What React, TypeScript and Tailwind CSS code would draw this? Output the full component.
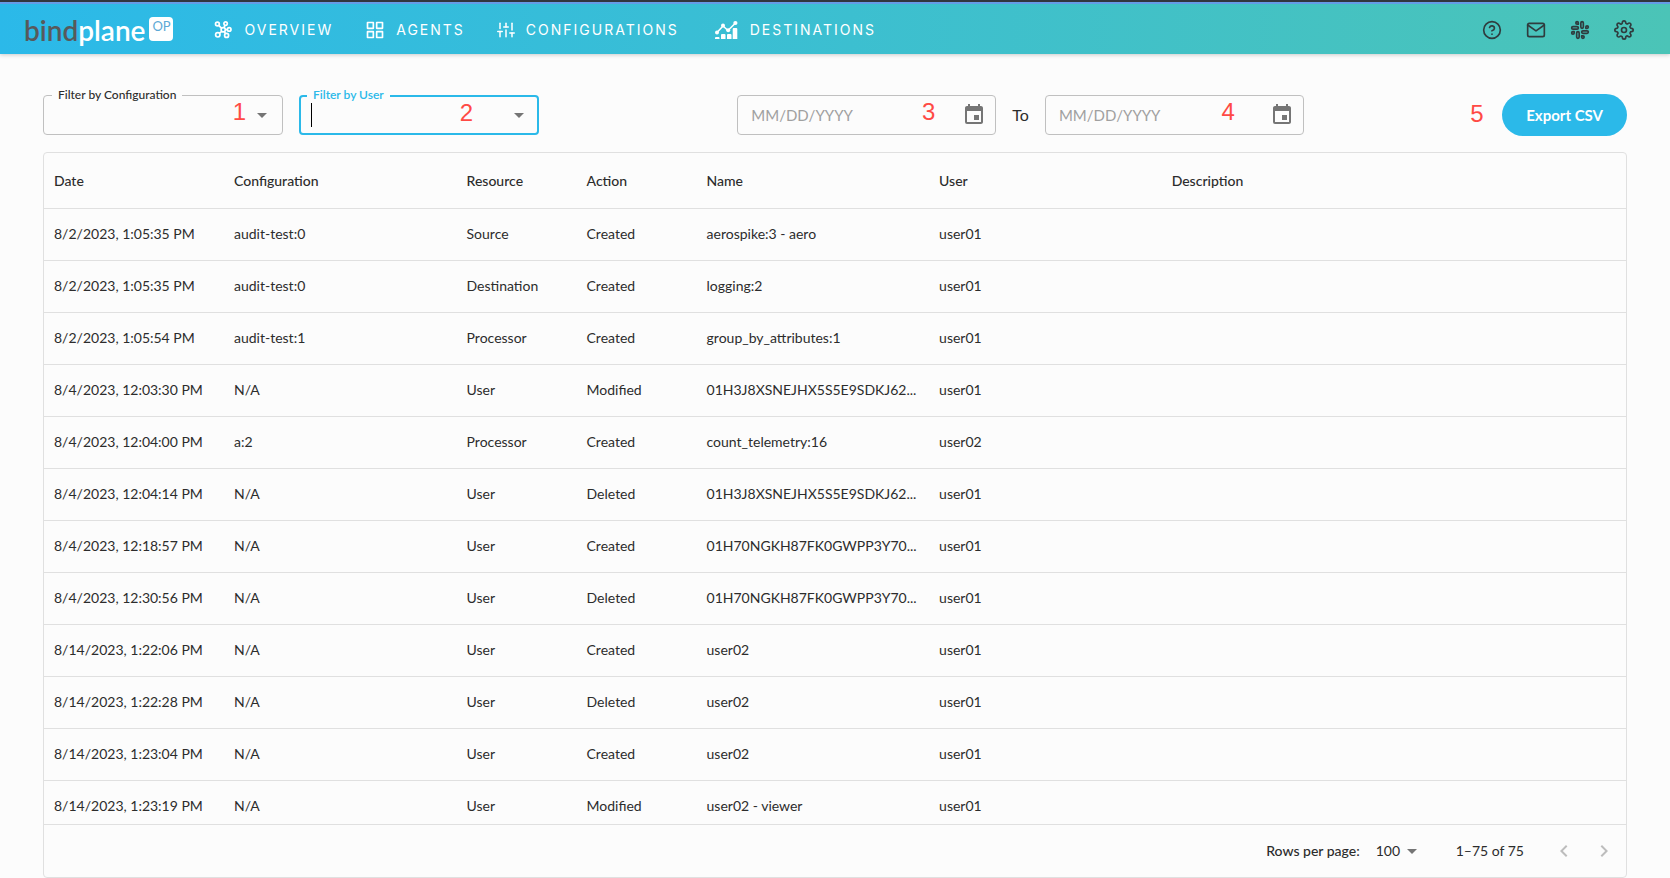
import React from 'react';
import { FiGrid, FiHelpCircle, FiMail, FiSettings, FiSlack, FiSliders } from 'react-icons/fi';
import { MdArrowDropDown, MdChevronLeft, MdChevronRight, MdEvent } from 'react-icons/md';

const OverviewIcon: React.FC = () => (
  <svg width="20" height="20" viewBox="0 0 20 20" fill="none" stroke="currentColor" strokeWidth="1.7">
    <circle cx="10.2" cy="9.8" r="2.1" />
    <circle cx="4.4" cy="4" r="1.9" />
    <circle cx="12.6" cy="3.6" r="1.7" />
    <circle cx="16.2" cy="9.4" r="1.8" />
    <circle cx="13.6" cy="15.4" r="2" />
    <circle cx="4.8" cy="14.8" r="2.2" />
    <path d="M5.7 5.3 8.7 8.3M12 5.2 11 7.8M12.2 9.6h2.2M11.2 11.6l1.5 2.2M8.7 11.3 6.3 13.3" />
  </svg>
);

const DestinationsIcon: React.FC = () => (
  <svg width="28" height="20" viewBox="-3 0 28 20" fill="currentColor">
    <path d="M3 12.5 9 6l5 4.5L21.5 3" fill="none" stroke="currentColor" strokeWidth="1.6" />
    <circle cx="3" cy="12.5" r="2" />
    <circle cx="9" cy="5.5" r="2" />
    <circle cx="14.2" cy="10.3" r="2" />
    <circle cx="21.4" cy="3" r="2.1" />
    <path d="M1 19v-1a1 1 0 0 1 1-1h2.5a1 1 0 0 1 1 1v1zM7 19v-4a1 1 0 0 1 1-1h2.5a1 1 0 0 1 1 1v4zM13 19v-4a1 1 0 0 1 1-1h2.5a1 1 0 0 1 1 1v4zM18.7 19V9a1 1 0 0 1 1-1h2.6a1 1 0 0 1 1 1v10z" />
  </svg>
);

const navItems = [
  { label: 'Overview', icon: <OverviewIcon /> },
  { label: 'Agents', icon: <FiGrid size={20} /> },
  { label: 'Configurations', icon: <FiSliders size={18} /> },
  { label: 'Destinations', icon: <DestinationsIcon /> },
];

const headerActions = [
  { label: 'Help', icon: FiHelpCircle },
  { label: 'Contact', icon: FiMail },
  { label: 'Slack', icon: FiSlack },
  { label: 'Settings', icon: FiSettings },
];

const columns = ['Date', 'Configuration', 'Resource', 'Action', 'Name', 'User', 'Description'];

const rows = [
  ['8/2/2023, 1:05:35 PM', 'audit-test:0', 'Source', 'Created', 'aerospike:3 - aero', 'user01', ''],
  ['8/2/2023, 1:05:35 PM', 'audit-test:0', 'Destination', 'Created', 'logging:2', 'user01', ''],
  ['8/2/2023, 1:05:54 PM', 'audit-test:1', 'Processor', 'Created', 'group_by_attributes:1', 'user01', ''],
  ['8/4/2023, 12:03:30 PM', 'N/A', 'User', 'Modified', '01H3J8XSNEJHX5S5E9SDKJ62...', 'user01', ''],
  ['8/4/2023, 12:04:00 PM', 'a:2', 'Processor', 'Created', 'count_telemetry:16', 'user02', ''],
  ['8/4/2023, 12:04:14 PM', 'N/A', 'User', 'Deleted', '01H3J8XSNEJHX5S5E9SDKJ62...', 'user01', ''],
  ['8/4/2023, 12:18:57 PM', 'N/A', 'User', 'Created', '01H70NGKH87FK0GWPP3Y70...', 'user01', ''],
  ['8/4/2023, 12:30:56 PM', 'N/A', 'User', 'Deleted', '01H70NGKH87FK0GWPP3Y70...', 'user01', ''],
  ['8/14/2023, 1:22:06 PM', 'N/A', 'User', 'Created', 'user02', 'user01', ''],
  ['8/14/2023, 1:22:28 PM', 'N/A', 'User', 'Deleted', 'user02', 'user01', ''],
  ['8/14/2023, 1:23:04 PM', 'N/A', 'User', 'Created', 'user02', 'user01', ''],
  ['8/14/2023, 1:23:19 PM', 'N/A', 'User', 'Modified', 'user02 - viewer', 'user01', ''],
];

const Marker: React.FC<{ value: string; className: string }> = ({ value, className }) => (
  <span
    className={`absolute font-["Liberation_Sans",sans-serif] text-2xl leading-6 text-[#ff4a45] pointer-events-none ${className}`}
  >
    {value}
  </span>
);

interface FilterFieldProps {
  id: string;
  label: string;
  marker: string;
  focused?: boolean;
}

const FilterField: React.FC<FilterFieldProps> = ({ id, label, marker, focused }) => (
  <div
    className={`relative flex items-center w-60 h-10 rounded ${
      focused ? 'border-2 border-[#2bb9e9] pl-2.5 pr-1.5' : 'border border-[#c0c0c0] pl-3 pr-2'
    }`}
  >
    <label
      htmlFor={id}
      className={`absolute px-1.5 bg-[#fcfcfc] text-xs leading-4 whitespace-nowrap ${
        focused ? '-top-2.5 left-1.5 text-[#2bb9e9] font-semibold' : '-top-[9px] left-2 text-[#2c2c2c] font-medium'
      }`}
    >
      {label}
    </label>
    {focused && <span className="w-px h-6 bg-black shrink-0" />}
    <input id={id} type="text" role="combobox" aria-expanded="false" className="flex-1 min-w-0 bg-transparent outline-none text-sm" />
    <button type="button" aria-label={`Open ${label}`} className="text-[#757575]">
      <MdArrowDropDown size={24} />
    </button>
    <Marker value={marker} className={focused ? 'right-16 top-1' : 'right-9 top-1'} />
  </div>
);

const DateField: React.FC<{ label: string; marker: string }> = ({ label, marker }) => (
  <div className="relative flex items-center w-[259px] h-10 rounded border border-[#c0c0c0] pl-[13px] pr-[9px]">
    <input
      type="text"
      aria-label={label}
      placeholder="MM/DD/YYYY"
      className="flex-1 min-w-0 bg-transparent outline-none text-[15px] placeholder:text-[#a0a0a0]"
    />
    <button type="button" aria-label={`Choose ${label.toLowerCase()}`} className="text-[#757575]">
      <MdEvent size={24} />
    </button>
    <Marker value={marker} className={marker === '3' ? 'right-15 top-1' : 'right-17 top-1'} />
  </div>
);

const App: React.FC = () => {
  return (
    <div className='h-screen flex flex-col bg-[#fcfcfc] font-["Lato",sans-serif] text-[#2c2c2c]'>
      {/* Navigation */}
      <header className="shrink-0 flex items-center h-[54px] pl-6 pr-9 pt-1 border-t-2 border-[#30363d] bg-linear-to-r from-[#2bb9e9] to-[#4bc4b7] shadow-[inset_0_2px_0_#659be6,0_1px_4px_rgba(0,0,0,0.2)]">
        <a href="#" className="flex items-center mr-10">
          <span className="text-[28px] leading-8 font-semibold text-[#58595b]">
            bind<span className="text-white">plane</span>
          </span>
          <span className="w-6 h-6 ml-1 mb-0.5 rounded-sm bg-white text-center text-[13px] leading-[18px] text-[#5ba9d6]">OP</span>
        </a>
        <nav className="flex items-center gap-8">
          {navItems.map((item) => (
            <a
              key={item.label}
              href="#"
              className='flex items-center gap-[11px] font-["Inter",sans-serif] text-sm uppercase tracking-[2px] text-white'
            >
              {item.icon}
              {item.label}
            </a>
          ))}
        </nav>
        <div className="ml-auto flex items-center gap-6 text-[#2f3c3e]">
          {headerActions.map((action) => {
            const Icon = action.icon;
            return (
              <button key={action.label} type="button" aria-label={action.label}>
                <Icon size={20} />
              </button>
            );
          })}
        </div>
      </header>

      <main className="flex-1 min-h-0 flex flex-col px-[43px] pt-10">
        {/* Filters */}
        <div className="flex items-center justify-between mb-4">
          <div className="flex gap-4">
            <FilterField id="filter-configuration" label="Filter by Configuration" marker="1" />
            <FilterField id="filter-user" label="Filter by User" marker="2" focused />
          </div>
          <div className="flex items-center gap-4">
            <DateField label="Start date" marker="3" />
            <span className="text-base">To</span>
            <DateField label="End date" marker="4" />
          </div>
          <div className="relative">
            <Marker value="5" className="-left-8 top-2" />
            <button type="button" className="h-[42px] px-6 rounded-full bg-[#2bb9e9] text-[15px] font-bold text-white">
              Export CSV
            </button>
          </div>
        </div>

        {/* Audit events */}
        <div className="flex-1 min-h-0 flex flex-col rounded border border-[#e0e0e0]">
          <div className="flex-1 min-h-0 overflow-y-auto [scrollbar-width:none]">
            <table className="w-full table-fixed border-separate border-spacing-0 text-sm">
              <colgroup>
                <col className="w-[180px]" />
                <col className="w-[14.7%]" />
                <col className="w-[120px]" />
                <col className="w-[120px]" />
                <col className="w-[14.7%]" />
                <col className="w-[14.7%]" />
                <col />
              </colgroup>
              <thead>
                <tr>
                  {columns.map((column) => (
                    <th key={column} className="h-14 px-2.5 border-b border-[#e0e0e0] text-left font-medium">
                      {column}
                    </th>
                  ))}
                </tr>
              </thead>
              <tbody>
                {rows.map((row, rowIndex) => (
                  <tr key={rowIndex}>
                    {row.map((cell, cellIndex) => (
                      <td key={cellIndex} className="h-[52px] px-2.5 pb-0.5 border-b border-[#e0e0e0] truncate">
                        {cell}
                      </td>
                    ))}
                  </tr>
                ))}
              </tbody>
            </table>
          </div>

          {/* Pagination */}
          <div className="shrink-0 flex items-center justify-end h-[53px] pr-2.5 border-t border-[#e0e0e0] text-sm">
            <label htmlFor="rows-per-page" className="font-medium">Rows per page:</label>
            <div className="relative flex items-center ml-4 mr-8">
              <select id="rows-per-page" defaultValue="100" className="appearance-none bg-transparent w-12 outline-none">
                <option>25</option>
                <option>50</option>
                <option>100</option>
              </select>
              <MdArrowDropDown size={24} className="absolute right-0 text-[#757575] pointer-events-none" />
            </div>
            <span className="mr-7">1–75 of 75</span>
            <div className="flex gap-4 text-[#bdbdbd]">
              <button type="button" aria-label="Previous page" disabled>
                <MdChevronLeft size={24} />
              </button>
              <button type="button" aria-label="Next page" disabled>
                <MdChevronRight size={24} />
              </button>
            </div>
          </div>
        </div>
      </main>
    </div>
  );
};

export default App;
